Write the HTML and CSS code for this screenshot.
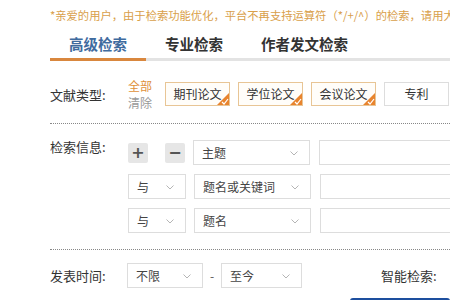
FILE: index.html
```html
<!DOCTYPE html>
<html lang="zh-CN">
<head>
    <meta charset="UTF-8">
    <meta name="viewport" content="width=device-width, initial-scale=1.0">
    <title>高级检索</title>
    <link rel="stylesheet" href="styles.css">
</head>
<body>
    <div class="page">
        <!-- Notice -->
        <div class="notice">*亲爱的用户，由于检索功能优化，平台不再支持运算符（*/+/^）的检索，请用大小写（AND/OR/NOT）代替。</div>

        <!-- Tabs -->
        <div class="tabs">
            <div class="tab active">高级检索</div>
            <div class="tab">专业检索</div>
            <div class="tab">作者发文检索</div>
        </div>

        <!-- Document type -->
        <div class="row row-type">
            <div class="label">文献类型:</div>
            <div class="all-clear">
                <span class="all">全部</span>
                <span class="clear">清除</span>
            </div>
            <div class="type-box checked">期刊论文
                <svg class="corner" width="12" height="12" viewBox="0 0 12 12"><path d="M12 0 L12 12 L0 12 Z" fill="#e8842e"/><path d="M5 9 L7 11 L11 6" stroke="#fff" stroke-width="1.2" fill="none"/></svg>
            </div>
            <div class="type-box checked">学位论文
                <svg class="corner" width="12" height="12" viewBox="0 0 12 12"><path d="M12 0 L12 12 L0 12 Z" fill="#e8842e"/><path d="M5 9 L7 11 L11 6" stroke="#fff" stroke-width="1.2" fill="none"/></svg>
            </div>
            <div class="type-box checked">会议论文
                <svg class="corner" width="12" height="12" viewBox="0 0 12 12"><path d="M12 0 L12 12 L0 12 Z" fill="#e8842e"/><path d="M5 9 L7 11 L11 6" stroke="#fff" stroke-width="1.2" fill="none"/></svg>
            </div>
            <div class="type-box">专利</div>
        </div>

        <!-- Search info -->
        <div class="row row-info">
            <div class="label label-top">检索信息:</div>
            <div class="conditions">
                <div class="cond">
                    <div class="btn-pm">+</div>
                    <div class="btn-pm">−</div>
                    <div class="select field">主题
                        <svg class="chev" width="8" height="5" viewBox="0 0 8 5"><path d="M0.5 0.5 L4 4 L7.5 0.5" stroke="#b5b5b5" fill="none"/></svg>
                    </div>
                    <div class="input"></div>
                </div>
                <div class="cond">
                    <div class="select logic">与
                        <svg class="chev" width="8" height="5" viewBox="0 0 8 5"><path d="M0.5 0.5 L4 4 L7.5 0.5" stroke="#b5b5b5" fill="none"/></svg>
                    </div>
                    <div class="select field">题名或关键词
                        <svg class="chev" width="8" height="5" viewBox="0 0 8 5"><path d="M0.5 0.5 L4 4 L7.5 0.5" stroke="#b5b5b5" fill="none"/></svg>
                    </div>
                    <div class="input"></div>
                </div>
                <div class="cond">
                    <div class="select logic">与
                        <svg class="chev" width="8" height="5" viewBox="0 0 8 5"><path d="M0.5 0.5 L4 4 L7.5 0.5" stroke="#b5b5b5" fill="none"/></svg>
                    </div>
                    <div class="select field">题名
                        <svg class="chev" width="8" height="5" viewBox="0 0 8 5"><path d="M0.5 0.5 L4 4 L7.5 0.5" stroke="#b5b5b5" fill="none"/></svg>
                    </div>
                    <div class="input"></div>
                </div>
            </div>
        </div>

        <!-- Date -->
        <div class="row row-date">
            <div class="label">发表时间:</div>
            <div class="select date-from">不限
                <svg class="chev" width="8" height="5" viewBox="0 0 8 5"><path d="M0.5 0.5 L4 4 L7.5 0.5" stroke="#b5b5b5" fill="none"/></svg>
            </div>
            <span class="dash">-</span>
            <div class="select date-to">至今
                <svg class="chev" width="8" height="5" viewBox="0 0 8 5"><path d="M0.5 0.5 L4 4 L7.5 0.5" stroke="#b5b5b5" fill="none"/></svg>
            </div>
            <div class="smart">智能检索:</div>
        </div>

        <div class="actions">
            <button class="search-btn">检索</button>
        </div>
    </div>
</body>
</html>
```

FILE: styles.css
```css
body {
    margin: 0;
    background: #fff;
    font-family: "Noto Sans CJK SC", "Liberation Sans", sans-serif;
    color: #333;
    overflow: hidden;
}

.page {
    width: 600px;
    padding-left: 50px;
}

.notice {
    height: 30px;
    line-height: 30px;
    font-size: 11.3px;
    color: #d9a04a;
    white-space: nowrap;
}

.tabs {
    display: flex;
    border-bottom: 3px solid #e3e3e3;
}

.tab {
    padding: 0 19px;
    height: 28px;
    line-height: 28px;
    font-size: 14.5px;
    font-weight: bold;
    color: #333;
}

.tab.active {
    color: #3f6b9e;
    border-bottom: 3px solid #d9873e;
    margin-bottom: -3px;
}

.row {
    display: flex;
    align-items: center;
}

.label {
    width: 78px;
    font-size: 13px;
    color: #333;
    flex-shrink: 0;
}

.label-top {
    align-self: flex-start;
    line-height: 18px;
    margin-top: -2px;
}

/* document type */
.row-type {
    padding: 16px 0 12px;
    border-bottom: 1px dotted #888;
}

.all-clear {
    display: flex;
    flex-direction: column;
    width: 37px;
    font-size: 12px;
    line-height: 17px;
}

.all {
    color: #e0913a;
}

.clear {
    color: #999;
}

.type-box {
    position: relative;
    width: 63px;
    height: 22px;
    line-height: 22px;
    margin-right: 8px;
    border: 1px solid #ddd;
    text-align: center;
    font-size: 12px;
    color: #333;
    background: #fff;
}

.type-box.checked {
    border-color: #e8c595;
    background: #fffdf9;
}

.corner {
    position: absolute;
    right: 0;
    bottom: 0;
}

/* search info */
.row-info {
    padding: 16px 0 16px;
    border-bottom: 1px dotted #888;
}

.conditions {
    display: flex;
    flex-direction: column;
    gap: 9px;
}

.cond {
    display: flex;
    align-items: center;
}

.btn-pm {
    width: 20px;
    height: 20px;
    line-height: 20px;
    margin-right: 17px;
    background: #e6e6e6;
    border-radius: 2px;
    text-align: center;
    font-size: 16px;
    font-weight: bold;
    color: #555;
    font-family: "DejaVu Sans", sans-serif;
}

.btn-pm + .btn-pm {
    margin-right: 8px;
}

.select {
    position: relative;
    height: 23px;
    line-height: 23px;
    border: 1px solid #ddd;
    padding-left: 8px;
    font-size: 12px;
    color: #444;
    box-sizing: content-box;
}

.chev {
    position: absolute;
    right: 11px;
    top: 10px;
}

.logic {
    width: 48px;
    margin-right: 8px;
}

.field {
    width: 107px;
    margin-right: 9px;
}

.input {
    width: 200px;
    height: 23px;
    border: 1px solid #ddd;
}

/* date */
.row-date {
    padding-top: 13px;
}

.date-from {
    width: 66px;
    margin-left: -1px;
}

.dash {
    width: 18px;
    text-align: center;
    font-size: 12px;
    color: #555;
}

.date-to {
    width: 71px;
}

.smart {
    margin-left: 79px;
    font-size: 13px;
    color: #333;
}

.actions {
    padding: 10px 0 0 300px;
}

.search-btn {
    width: 100px;
    height: 34px;
    border: none;
    border-radius: 3px;
    background: #1d4f9e;
    color: #fff;
    font-size: 16px;
    font-weight: bold;
    font-family: "Noto Sans CJK SC", sans-serif;
}
```
